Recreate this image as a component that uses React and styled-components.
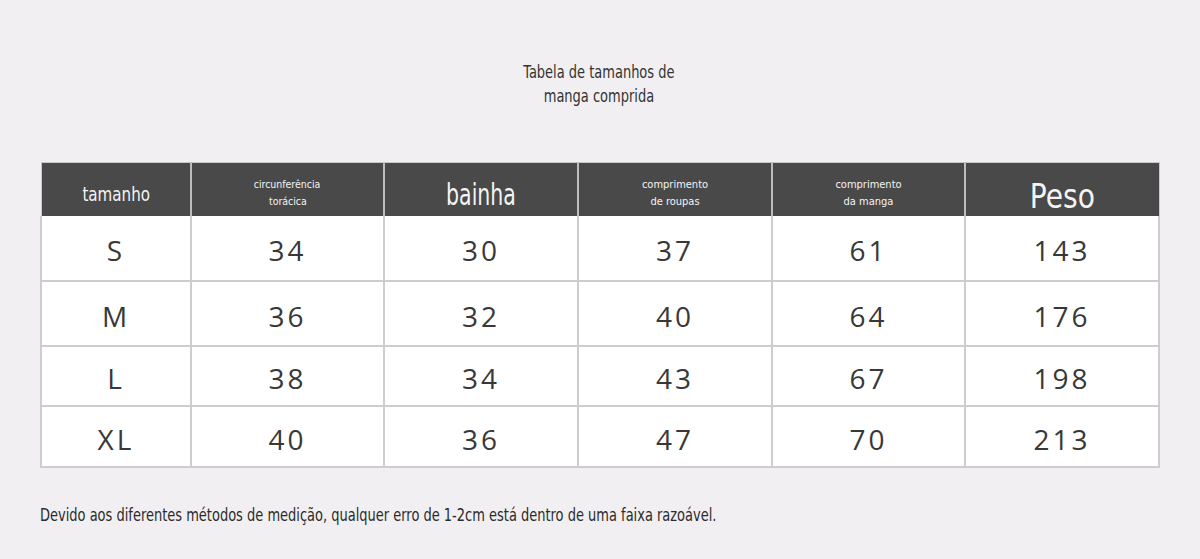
import React from "react";
import styled, { createGlobalStyle } from "styled-components";

const GlobalStyle = createGlobalStyle`
  html, body {
    margin: 0;
    padding: 0;
    background: #f1eff1;
  }
`;

const condensed = `"DejaVu Sans Condensed", "DejaVu Sans", sans-serif`;

// ================= PAGE =================
const Page = styled.div`
  width: 1200px;
  height: 559px;
  box-sizing: border-box;
  padding: 60px 42px 0 40px;
  display: flex;
  flex-direction: column;
  background: #f1eff1;
  font-family: ${condensed};
  font-stretch: condensed;
  color: #333;
`;

// squeezes condensed text a bit more, like the narrow face in the picture
const Squeeze = styled.span`
  display: inline-block;
  white-space: nowrap;
  transform: scaleX(${({ $x }) => $x});
  transform-origin: ${({ $origin }) => $origin || "center"};
`;

const Title = styled.h1`
  margin: 0 0 54px;
  text-align: center;
  font-size: 17px;
  line-height: 24px;
  font-weight: 400;
  color: #333;
`;

// ================= TABLE =================
const Table = styled.table`
  width: 1118px;
  border-collapse: collapse;
  table-layout: fixed;
  border: 1px solid #c9c9c9;
`;

const HeadRow = styled.tr`
  height: 53px;
`;

const HeadCell = styled.th`
  box-sizing: border-box;
  height: 53px;
  padding: ${({ $pad }) => $pad}px 0 0;
  background: #494949;
  color: #f4f4f4;
  font-weight: 400;
  text-align: center;
  vertical-align: middle;
  border-left: 2px solid #bdbdbd;
  font-size: ${({ $size }) => $size}px;
  line-height: ${({ $size }) => ($size < 14 ? "17px" : "1")};

  &:first-child {
    border-left: none;
  }
`;

const Row = styled.tr`
  height: ${({ $h }) => $h}px;
`;

const Cell = styled.td`
  padding: 5px 0 0;
  background: #fff;
  text-align: center;
  font-family: "Open Sans", "DejaVu Sans", sans-serif;
  font-stretch: normal;
  font-size: 28px;
  letter-spacing: 3px;
  color: #383838;
  border: 2px solid #cdcdcd;
  border-top-width: ${({ $first }) => ($first ? "0" : "2px")};
`;

const Note = styled.p`
  margin: 37px 0 0;
  font-size: 17px;
  color: #2b2b2b;
`;

const headers = [
  { text: "tamanho", size: 20, pad: 10, x: 0.84 },
  { text: ["circunferência", "torácica"], size: 11, pad: 7, x: 0.95 },
  { text: "bainha", size: 30, pad: 12, x: 0.76 },
  { text: ["comprimento", "de roupas"], size: 11, pad: 7, x: 1 },
  { text: ["comprimento", "da manga"], size: 11, pad: 7, x: 1 },
  { text: "Peso", size: 34, pad: 14, x: 0.92 },
];

const rows = [
  { h: 65, cells: ["S", "34", "30", "37", "61", "143"] },
  { h: 65, cells: ["M", "36", "32", "40", "64", "176"] },
  { h: 60, cells: ["L", "38", "34", "43", "67", "198"] },
  { h: 61, cells: ["XL", "40", "36", "47", "70", "213"] },
];

const widths = [150, 193, 194, 194, 193, 194];

// ================= COMPONENT =================
export default function App() {
  return (
    <>
      <GlobalStyle />
      <Page>
        <Title>
          <Squeeze $x={0.85}>Tabela de tamanhos de</Squeeze>
          <br />
          <Squeeze $x={0.85}>manga comprida</Squeeze>
        </Title>

        <Table>
          <colgroup>
            {widths.map((w, i) => (
              <col key={i} style={{ width: w }} />
            ))}
          </colgroup>
          <thead>
            <HeadRow>
              {headers.map((h, i) => (
                <HeadCell key={i} $size={h.size} $pad={h.pad}>
                  {Array.isArray(h.text) ? (
                    <>
                      <Squeeze $x={h.x}>{h.text[0]}</Squeeze>
                      <br />
                      <Squeeze $x={h.x}>{h.text[1]}</Squeeze>
                    </>
                  ) : (
                    <Squeeze $x={h.x}>{h.text}</Squeeze>
                  )}
                </HeadCell>
              ))}
            </HeadRow>
          </thead>
          <tbody>
            {rows.map((r, i) => (
              <Row key={i} $h={r.h}>
                {r.cells.map((c, j) => (
                  <Cell key={j} $first={i === 0}>
                    {c}
                  </Cell>
                ))}
              </Row>
            ))}
          </tbody>
        </Table>

        <Note>
          <Squeeze $x={0.85} $origin="left">
            Devido aos diferentes métodos de medição, qualquer erro de 1-2cm
            está dentro de uma faixa razoável.
          </Squeeze>
        </Note>
      </Page>
    </>
  );
}
